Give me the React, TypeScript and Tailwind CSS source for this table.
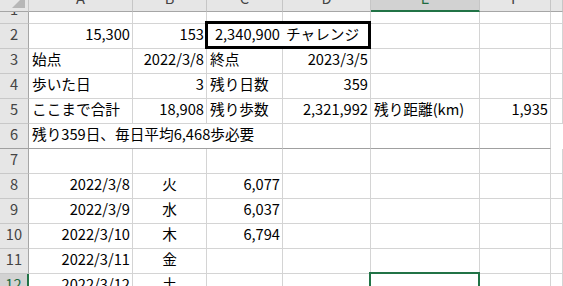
import React from 'react';

type Align = 'left' | 'right' | 'center';
type Cell = { text: string; align: Align; span?: number } | null;

interface SheetRow {
  n: number;
  cells: Cell[];
}

const COLUMNS = ['A', 'B', 'C', 'D', 'E', 'F', 'G'];
const GRID = 'grid grid-cols-[29px_104px_74px_76px_88px_109px_71px_1fr]';

const L = (text: string): Cell => ({ text, align: 'left' });
const R = (text: string): Cell => ({ text, align: 'right' });
const C = (text: string): Cell => ({ text, align: 'center' });

// rows 2..12, columns A..G
const ROWS: SheetRow[] = [
  { n: 2, cells: [R('15,300'), R('153'), R('2,340,900'), L('チャレンジ'), null, null, null] },
  { n: 3, cells: [L('始点'), R('2022/3/8'), L('終点'), R('2023/3/5'), null, null, null] },
  { n: 4, cells: [L('歩いた日'), R('3'), L('残り日数'), R('359'), null, null, null] },
  { n: 5, cells: [L('ここまで合計'), R('18,908'), L('残り歩数'), R('2,321,992'), L('残り距離(km)'), R('1,935'), null] },
  { n: 6, cells: [{ text: '残り359日、毎日平均6,468歩必要', align: 'left', span: 3 }, null, null, null] },
  { n: 7, cells: [null, null, null, null, null, null, null] },
  { n: 8, cells: [R('2022/3/8'), C('火'), R('6,077'), null, null, null, null] },
  { n: 9, cells: [R('2022/3/9'), C('水'), R('6,037'), null, null, null, null] },
  { n: 10, cells: [R('2022/3/10'), C('木'), R('6,794'), null, null, null, null] },
  { n: 11, cells: [R('2022/3/11'), C('金'), null, null, null, null, null] },
  { n: 12, cells: [R('2022/3/12'), C('土'), null, null, null, null, null] },
];

const ALIGN_CLASS: Record<Align, string> = {
  left: 'justify-start pl-[3px]',
  right: 'justify-end pr-[2px]',
  center: 'justify-center',
};

function ColumnHeader() {
  return (
    <div className={`${GRID} h-[12px]`}>
      {/* select-all corner */}
      <div className="h-[12px] overflow-hidden border-r border-b border-r-[#c6c6c6] border-b-[#a6a6a6] bg-[#e6e6e6]">
        <svg width="28" height="11" viewBox="0 0 28 11">
          <polygon points="12,8 25,8 25,-5" fill="#b7b7b7" />
        </svg>
      </div>
      {COLUMNS.map((col) => {
        const selected = col === 'E';
        return (
          <div
            key={col}
            className={
              selected
                ? 'h-[12px] overflow-hidden border-r border-b-2 border-r-[#c6c6c6] border-b-[#217346] bg-[#d2d2d2] text-[#1e6b40]'
                : 'h-[12px] overflow-hidden border-r border-b border-r-[#c6c6c6] border-b-[#a6a6a6] bg-[#e6e6e6] text-[#444]'
            }
          >
            {col !== 'G' && (
              <div className="-mt-[12px] flex h-[24px] items-center justify-center pb-[3px]">{col}</div>
            )}
          </div>
        );
      })}
    </div>
  );
}

function FirstRow() {
  // row 1 sits mostly under the frozen header, only its lower edge shows
  return (
    <div className={`${GRID} h-[12px]`}>
      <div className="h-[12px] overflow-hidden border-r border-b border-r-[#a6a6a6] border-b-[#c8c8c8] bg-[#e6e6e6] text-[#444]">
        <div className="-mt-[13px] flex h-[24px] items-center justify-center pb-[3px]">1</div>
      </div>
      {COLUMNS.map((col) => (
        <div key={col} className="h-[12px] border-r border-b border-[#d4d4d4]" />
      ))}
    </div>
  );
}

function BodyRow({ row }: { row: SheetRow }) {
  const selected = row.n === 12;
  const bottom = row.n === 6 ? 'border-b-[#a0a0a0]' : 'border-b-[#d4d4d4]';

  return (
    <div className={`${GRID} h-[25px]`}>
      <div
        className={
          selected
            ? `flex h-[25px] items-center justify-center border-r-2 border-b pb-[3px] border-r-[#217346] ${bottom} bg-[#d2d2d2] text-[#1e6b40]`
            : `flex h-[25px] items-center justify-center border-r border-b pb-[3px] border-r-[#a6a6a6] ${row.n === 6 ? 'border-b-[#a0a0a0]' : 'border-b-[#c8c8c8]'} bg-[#e6e6e6] text-[#444]`
        }
      >
        {row.n}
      </div>
      {row.cells.map((cell, i) => {
        const hideRight = row.n === 2 && i === 2;
        return (
          <div
            key={i}
            className={`flex h-[25px] items-center whitespace-nowrap border-r border-b pb-[3px] text-black ${
              hideRight ? 'border-r-white' : 'border-r-[#d4d4d4]'
            } ${bottom} ${cell ? ALIGN_CLASS[cell.align] : ''} ${cell?.span === 3 ? 'col-span-3' : ''}`}
          >
            {cell?.text}
          </div>
        );
      })}
    </div>
  );
}

export default function App() {
  return (
    <div className="relative h-[286px] w-[563px] overflow-hidden bg-white font-['Noto_Sans_CJK_JP','Noto_Sans',sans-serif] text-[14.67px] leading-none">
      <ColumnHeader />
      <FirstRow />
      {ROWS.map((row) => (
        <BodyRow key={row.n} row={row} />
      ))}

      {/* thick border around C2:D2 */}
      <div className="pointer-events-none absolute left-[205px] top-[21px] h-[28px] w-[166px] border-[3px] border-black" />
      {/* active cell E12 */}
      <div className="pointer-events-none absolute left-[369px] top-[272px] h-[20px] w-[111px] border-2 border-[#217346]" />
    </div>
  );
}
